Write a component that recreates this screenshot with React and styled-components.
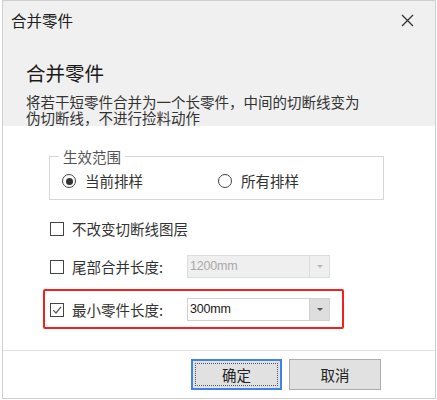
import React from "react";
import styled, { createGlobalStyle } from "styled-components";

const Global = createGlobalStyle`
  html, body { margin: 0; padding: 0; background: #ffffff; }
  body { font-family: "Noto Sans CJK SC", "Noto Sans", sans-serif; color: #333; }
  * { box-sizing: border-box; }
`;

const Window = styled.div`
  margin-left: 2px;
  width: 434px;
  height: 399px;
  border: 1px solid #cfcfcf;
  display: flex;
  flex-direction: column;
  background: #fff;
`;

const TitleBar = styled.div`
  height: 38px;
  flex: none;
  display: flex;
  align-items: center;
  justify-content: space-between;
  padding: 0 21px 0 8px;
  background: #f0f0f0;
  font-size: 15.5px;
  line-height: 16px;
  color: #222;
`;

const Header = styled.div`
  background: #f0f0f0;
  padding: 22px 0 0 23px;
  flex: none;
`;

const Heading = styled.div`
  font-size: 19.5px;
  line-height: 24px;
  color: #1a1a1a;
  font-weight: 400;
`;

const Description = styled.div`
  margin-top: 9px;
  font-size: 14.5px;
  line-height: 16px;
  color: #333;
`;

const Body = styled.div`
  flex: 1;
  background: #fff;
  padding: 23px 0 0 46px;
  border-bottom: 1px solid #e2e2e2;
`;

const Group = styled.fieldset`
  margin: 0;
  width: 330px;
  border: 1px solid #d6d6d6;
  padding: 9px 9px 10px 12px;
`;

const Legend = styled.legend`
  padding: 0 4px;
  margin-left: -3px;
  font-size: 14.5px;
  line-height: 15px;
  color: #555;
`;

const RadioRow = styled.div`
  display: flex;
`;

const RadioItem = styled.label`
  width: 156px;
  display: flex;
  align-items: center;
  gap: 9px;
  font-size: 14.5px;
  line-height: 16px;
  color: #333;
`;

const RadioCircle = styled.span`
  width: 14px;
  height: 14px;
  border-radius: 50%;
  border: 1px solid #444;
  display: flex;
  align-items: center;
  justify-content: center;
  background: #fff;
  &::after {
    content: "";
    width: 7px;
    height: 7px;
    border-radius: 50%;
    background: ${(p) => (p.$checked ? "#333" : "transparent")};
  }
`;

const Rows = styled.div`
  padding-left: 1px;
`;

const Row = styled.div`
  display: flex;
  align-items: center;
  height: ${(p) => p.$h || 23}px;
  margin-top: ${(p) => p.$mt || 0}px;
`;

const Box = styled.span`
  width: 14px;
  height: 14px;
  border: 1px solid #444;
  background: #fff;
  flex: none;
  display: flex;
  align-items: center;
  justify-content: center;
`;

const Label = styled.span`
  margin-left: 8px;
  font-size: 14.5px;
  line-height: 16px;
  color: #333;
  width: ${(p) => (p.$w ? `${p.$w}px` : "auto")};
  flex: none;
`;

const Highlight = styled.div`
  margin: 11px 0 0 -7px;
  width: 301px;
  border: 2px solid #f5201e;
  border-radius: 2px;
  padding: 7px 0 6px 5px;
`;

const Combo = styled.div`
  width: 143px;
  height: 23px;
  display: flex;
  border: 1px solid ${(p) => (p.$disabled ? "#dcdcdc" : "#d2d2d2")};
  background: ${(p) => (p.$disabled ? "#efefef" : "#fff")};
`;

const ComboText = styled.span`
  flex: 1;
  padding-left: 2px;
  font-family: "Liberation Sans", Arial, sans-serif;
  font-size: 12.5px;
  line-height: 21px;
  color: ${(p) => (p.$disabled ? "#a9a9a9" : "#1a1a1a")};
  letter-spacing: -0.2px;
`;

const ComboButton = styled.span`
  width: 20px;
  flex: none;
  border-left: 1px solid ${(p) => (p.$disabled ? "#dcdcdc" : "#cfcfcf")};
  background: ${(p) => (p.$disabled ? "#efefef" : "#dedede")};
  display: flex;
  align-items: center;
  justify-content: center;
  &::after {
    content: "";
    border-left: 3px solid transparent;
    border-right: 3px solid transparent;
    border-top: 3px solid ${(p) => (p.$disabled ? "#b5b5b5" : "#555")};
  }
`;

const Footer = styled.div`
  height: 47px;
  flex: none;
  display: flex;
  justify-content: flex-end;
  gap: 7px;
  padding: 8px 54px 0 0;
  background: #fff;
`;

const Button = styled.button`
  width: ${(p) => p.$w}px;
  height: 31px;
  background: #e1e1e1;
  border: ${(p) => (p.$primary ? "2px solid #3f82ec" : "1px solid #adadad")};
  padding: 0;
  position: relative;
  font-family: "Noto Sans CJK SC", sans-serif;
  font-size: 14.5px;
  line-height: 16px;
  color: #222;
  display: flex;
  align-items: center;
  justify-content: center;
  border-radius: 0;
`;

const FocusRing = styled.span`
  position: absolute;
  inset: 2px;
  border: 1px dotted #555;
  pointer-events: none;
`;

const CloseIcon = () => (
  <svg width="13" height="13" viewBox="0 0 13 13">
    <path d="M1 1 L12 12 M12 1 L1 12" stroke="#333" strokeWidth="1.3" fill="none" />
  </svg>
);

const CheckMark = () => (
  <svg width="10" height="10" viewBox="0 0 10 10">
    <path d="M1.2 5.2 L4 8 L9 1.8" stroke="#555" strokeWidth="1.2" fill="none" />
  </svg>
);

export default function App() {
  return (
    <>
      <Global />
      <Window>
        <TitleBar>
          <span>合并零件</span>
          <CloseIcon />
        </TitleBar>
        <Header>
          <Heading>合并零件</Heading>
          <Description>
            将若干短零件合并为一个长零件，中间的切断线变为
            <br />
            伪切断线，不进行捡料动作
          </Description>
        </Header>
        <Body>
          <Group>
            <Legend>生效范围</Legend>
            <RadioRow>
              <RadioItem>
                <RadioCircle $checked />
                当前排样
              </RadioItem>
              <RadioItem>
                <RadioCircle />
                所有排样
              </RadioItem>
            </RadioRow>
          </Group>
          <Rows>
            <Row $h={20} $mt={19}>
              <Box />
              <Label>不改变切断线图层</Label>
            </Row>
            <Row $mt={16}>
              <Box />
              <Label $w={115}>尾部合并长度:</Label>
              <Combo $disabled>
                <ComboText $disabled>1200mm</ComboText>
                <ComboButton $disabled />
              </Combo>
            </Row>
            <Highlight>
              <Row>
                <Box>
                  <CheckMark />
                </Box>
                <Label $w={115}>最小零件长度:</Label>
                <Combo>
                  <ComboText>300mm</ComboText>
                  <ComboButton />
                </Combo>
              </Row>
            </Highlight>
          </Rows>
        </Body>
        <Footer>
          <Button $primary $w={91}>
            <FocusRing />
            确定
          </Button>
          <Button $w={92}>取消</Button>
        </Footer>
      </Window>
    </>
  );
}
